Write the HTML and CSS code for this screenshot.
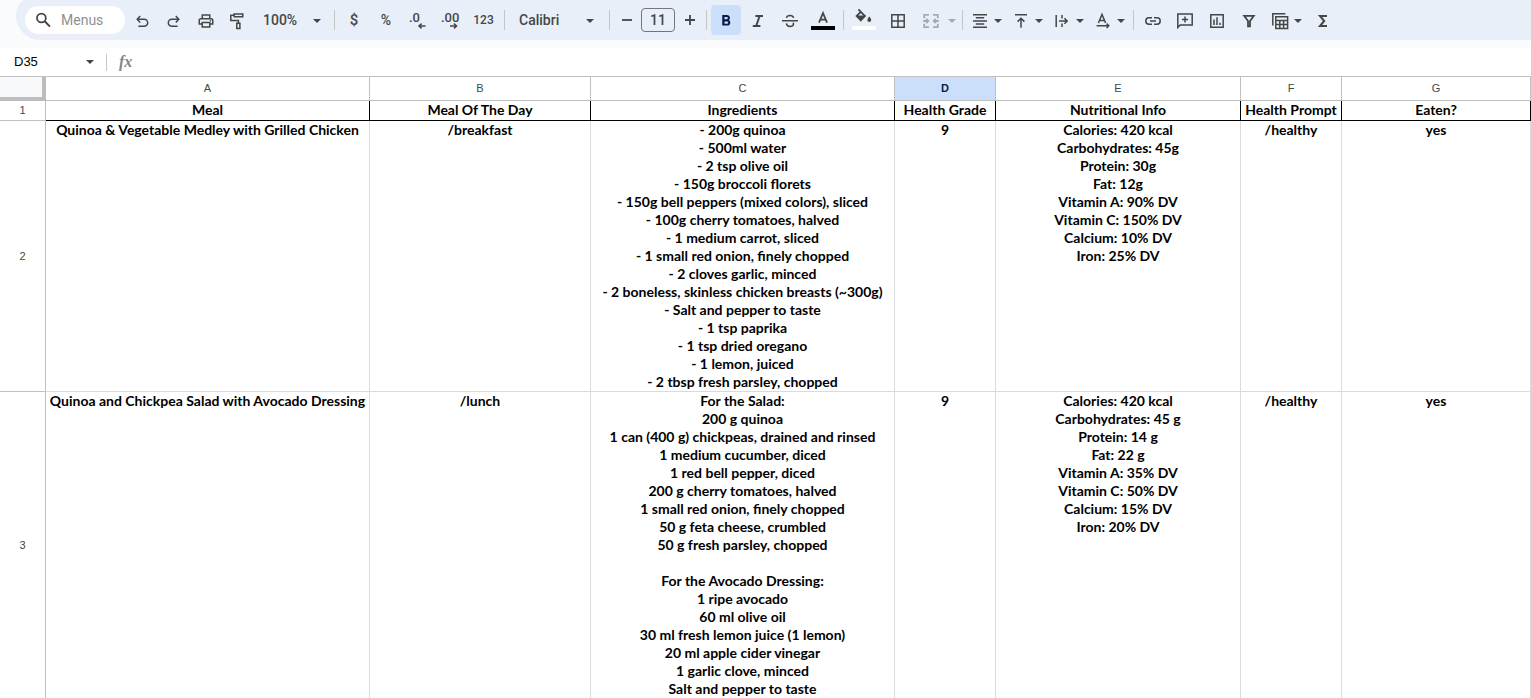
FILE: index.html
```html
<!DOCTYPE html>
<html lang="en">
<head>
<meta charset="utf-8">
<title>Meal plan</title>
<link rel="stylesheet" href="styles.css">
</head>
<body>
<header class="shell">
  <div class="toolbar" role="toolbar" aria-label="Formatting">
    <label class="search">
      <svg class="search-icon" viewBox="0 0 18 18" aria-hidden="true"><circle cx="6.4" cy="7" r="4.4" class="line bold"/><path d="M9.7 10.3 15 15.6" class="line heavy"/></svg>
      <input type="search" placeholder="Menus" aria-label="Menus">
    </label>
    <button class="tool" aria-label="Undo"><svg class="icon" viewBox="0 0 18 18"><path class="line" d="M7.2 4 4.2 7.2l3 3.2M4.5 7.2h6.7a3.4 3.4 0 0 1 0 7H5.4"/></svg></button>
    <button class="tool" aria-label="Redo"><svg class="icon" viewBox="0 0 18 18"><path class="line" d="M10.8 4l3 3.2-3 3.2M13.5 7.2H6.8a3.4 3.4 0 0 0 0 7h5.8"/></svg></button>
    <button class="tool" aria-label="Print"><svg class="icon" viewBox="0 0 24 24"><path d="M19 8h-1V3H6v5H5c-1.66 0-3 1.34-3 3v6h4v4h12v-4h4v-6c0-1.66-1.34-3-3-3zM8 5h8v3H8V5zm8 12v2H8v-4h8v4zm2-2v-2H6v2H4v-4c0-.55.45-1 1-1h14c.55 0 1 .45 1 1v4h-2z"/><circle cx="18" cy="11.5" r="1"/></svg></button>
    <button class="tool" aria-label="Paint format"><svg class="icon" viewBox="0 0 18 18"><path class="line" d="M5.2 1.9h8.6v2.9H5.2zM5 3.2H1.8v5.3h7.6v2.6M7.8 11.3h3.1v5.3H7.8z"/></svg></button>
    <div class="pick zoom"><select aria-label="Zoom"><option>100%</option></select><svg class="arrow" viewBox="0 0 8 4"><path d="M0 0h8L4 4z"/></svg></div>
    <span class="sep"></span>
    <button class="tool currency" aria-label="Format as currency">$</button>
    <button class="tool" aria-label="Format as percent">%</button>
    <button class="tool" aria-label="Decrease decimal places"><svg class="icon wide" viewBox="0 0 20 18"><text x="1" y="10">.0</text><path class="line" d="M17.5 14H11M13.6 11.6 11 14l2.6 2.4"/></svg></button>
    <button class="tool" aria-label="Increase decimal places"><svg class="icon wide" viewBox="0 0 20 18"><text x="1" y="10">.00</text><path class="line" d="M10 14h6.5M14 11.6l2.6 2.4-2.6 2.4"/></svg></button>
    <button class="tool number">123</button>
    <span class="sep"></span>
    <div class="pick font"><select aria-label="Font"><option>Calibri</option></select><svg class="arrow" viewBox="0 0 8 4"><path d="M0 0h8L4 4z"/></svg></div>
    <span class="sep"></span>
    <button class="tool step" aria-label="Decrease font size"><svg class="glyph" viewBox="0 0 18 18"><path class="line bold" d="M4 9h10"/></svg></button>
    <input class="size" type="text" value="11" aria-label="Font size">
    <button class="tool step" aria-label="Increase font size"><svg class="glyph" viewBox="0 0 18 18"><path class="line bold" d="M4 9h10M9 4v10"/></svg></button>
    <span class="sep"></span>
    <button class="tool on" aria-label="Bold" aria-pressed="true"><svg class="icon" viewBox="0 0 24 24"><path d="M15.6 10.8c.97-.67 1.65-1.77 1.65-2.8C17.25 5.7 15.5 4 13.25 4H7v14h7.04c2.1 0 3.71-1.7 3.71-3.8 0-1.5-.86-2.8-2.15-3.4zM10 6.5h3a1.5 1.5 0 0 1 0 3h-3zm3.5 9H10v-3h3.5a1.5 1.5 0 0 1 0 3z"/></svg></button>
    <button class="tool" aria-label="Italic"><svg class="icon" viewBox="0 0 18 18"><path class="line heavy" d="M6.4 4H14M3.8 14h7.6M10.6 4 7.2 14"/></svg></button>
    <button class="tool" aria-label="Strikethrough"><svg class="icon" viewBox="0 0 18 18"><path class="line" d="M1 8.7h16M12.6 5.9C12.2 4 11 3.4 9 3.4c-2 0-3.4.8-3.4 2.5M5.4 11.4c.2 2 1.6 3 3.6 3s3.5-.8 3.5-2.4c0-.6-.2-1-.5-1.4"/></svg></button>
    <button class="tool medium" aria-label="Text color"><svg class="swatch" viewBox="0 0 24 24"><path class="line bold" d="M8 12.6 12 3l4 9.6M9.2 9.7h5.6"/><path class="ink" d="M0 16h24v4H0z"/></svg></button>
    <span class="sep"></span>
    <button class="tool medium" aria-label="Fill color"><svg class="swatch" viewBox="0 0 24 24"><path class="line bold" d="M6.4 -.6 12.9 6 8.8 10.2 4.6 6 8.8 1.8"/><path d="M4 5.6h9.8L8.8 11.4zM17.3 6.6c1.3 1.7 1.9 2.4 1.9 3.4a1.9 1.9 0 0 1-3.8 0c0-1 .6-1.7 1.9-3.4z"/><path class="paper" d="M0 16h24v4H0z"/></svg></button>
    <button class="tool medium" aria-label="Borders"><svg class="icon" viewBox="0 0 18 18"><path class="line" d="M2.8 2.8h12.4v12.4H2.8zM9 2.8v12.4M2.8 9h12.4"/></svg></button>
    <button class="tool menu merge" disabled aria-label="Merge cells"><svg class="icon" viewBox="0 0 18 18"><path class="line bold" d="M7 2.8H2.2v3.4M7 15.2H2.2v-3.4M11 2.8h4.8v3.4M11 15.2h4.8v-3.4M1.2 9h5M4.2 6.8 6.4 9l-2.2 2.2M16.8 9h-5M13.8 6.8 11.6 9l2.2 2.2"/></svg><svg class="arrow" viewBox="0 0 8 4"><path d="M0 0h8L4 4z"/></svg></button>
    <span class="sep"></span>
    <button class="tool menu" aria-label="Horizontal align"><svg class="icon" viewBox="0 0 18 18"><path class="line" d="M2 2.7h14M4.8 5.8h8.4M2 9h14M4.8 12.1h8.4M2 15.2h14"/></svg><svg class="arrow" viewBox="0 0 8 4"><path d="M0 0h8L4 4z"/></svg></button>
    <button class="tool menu" aria-label="Vertical align"><svg class="icon" viewBox="0 0 18 18"><path class="line" d="M3 2.8h12M9 15.8V6.6M5.6 9.6 9 6.2l3.4 3.4"/></svg><svg class="arrow" viewBox="0 0 8 4"><path d="M0 0h8L4 4z"/></svg></button>
    <button class="tool menu" aria-label="Text wrapping"><svg class="icon" viewBox="0 0 18 18"><path class="line" d="M3.2 3v12M9 3v3.4M9 11.6V15M6 9h7.6M11.4 6.2 14.2 9l-2.8 2.8"/></svg><svg class="arrow" viewBox="0 0 8 4"><path d="M0 0h8L4 4z"/></svg></button>
    <button class="tool menu" aria-label="Text rotation"><svg class="icon" viewBox="0 0 18 18"><path class="line" d="M4.4 11 8 2.4l3.6 8.6M5.6 8.4h4.8M2.6 13.8h12M12.6 11.6l2.2 2.2-2.2 2.2"/></svg><svg class="arrow" viewBox="0 0 8 4"><path d="M0 0h8L4 4z"/></svg></button>
    <span class="sep"></span>
    <button class="tool" aria-label="Insert link"><svg class="icon" viewBox="0 0 18 18"><path class="line" d="M8 5.8H5a3.2 3.2 0 0 0 0 6.4h3M10 5.8h3a3.2 3.2 0 0 1 0 6.4h-3M6 9h6"/></svg></button>
    <button class="tool" aria-label="Insert comment"><svg class="icon" viewBox="0 0 18 18"><path class="line" d="M1.8 15.4V2h14.4v11H4.2zM9 4.4v6.2M5.9 7.5h6.2"/></svg></button>
    <button class="tool" aria-label="Insert chart"><svg class="icon" viewBox="0 0 18 18"><path class="line" d="M2.8 2.8h12.4v12.4H2.8zM6 7.4V13M9 5.2V13M12 10.8V13"/></svg></button>
    <button class="tool" aria-label="Create a filter"><svg class="icon" viewBox="0 0 18 18"><path class="line bold" d="M4.2 3.8h9.6L10 9v5.4H8V9z"/></svg></button>
    <button class="tool menu views" aria-label="Table views"><svg class="icon" viewBox="0 0 18 18"><path class="line" d="M1.8 13.5V1.8h12.6M4.8 4.8h11.8v11.6H4.8zM4.8 8.6h11.8M4.8 12.4h11.8M8.8 8.6v7.8M12.6 8.6v7.8"/></svg><svg class="arrow" viewBox="0 0 8 4"><path d="M0 0h8L4 4z"/></svg></button>
    <button class="tool" aria-label="Functions"><svg class="icon" viewBox="0 0 18 18"><path class="line heavy" d="M13 4H6l4.2 5L6 14h7"/></svg></button>
  </div>
</header>

<div class="formula-bar">
  <div class="name-box"><input type="text" value="D35" aria-label="Name box"><svg class="arrow" viewBox="0 0 8 4"><path d="M0 0h8L4 4z"/></svg></div>
  <label class="fx" for="formula">fx</label>
  <input class="formula" id="formula" type="text">
</div>

<table class="grid">
  <colgroup><col class="c-num"><col class="c-a"><col class="c-b"><col class="c-c"><col class="c-d"><col class="c-e"><col class="c-f"><col class="c-g"></colgroup>
  <thead>
    <tr><th class="corner"></th><th>A</th><th>B</th><th>C</th><th class="active">D</th><th>E</th><th>F</th><th>G</th></tr>
  </thead>
  <tbody>
    <tr class="titles"><th>1</th><td>Meal</td><td>Meal Of The Day</td><td>Ingredients</td><td>Health Grade</td><td>Nutritional Info</td><td>Health Prompt</td><td>Eaten?</td></tr>
    <tr><th>2</th><td>Quinoa &amp; Vegetable Medley with Grilled Chicken</td><td>/breakfast</td>
      <td>- 200g quinoa<br>- 500ml water<br>- 2 tsp olive oil<br>- 150g broccoli florets<br>- 150g bell peppers (mixed colors), sliced<br>- 100g cherry tomatoes, halved<br>- 1 medium carrot, sliced<br>- 1 small red onion, finely chopped<br>- 2 cloves garlic, minced<br>- 2 boneless, skinless chicken breasts (~300g)<br>- Salt and pepper to taste<br>- 1 tsp paprika<br>- 1 tsp dried oregano<br>- 1 lemon, juiced<br>- 2 tbsp fresh parsley, chopped</td>
      <td>9</td>
      <td>Calories: 420 kcal<br>Carbohydrates: 45g<br>Protein: 30g<br>Fat: 12g<br>Vitamin A: 90% DV<br>Vitamin C: 150% DV<br>Calcium: 10% DV<br>Iron: 25% DV</td>
      <td>/healthy</td><td>yes</td></tr>
    <tr><th>3</th><td>Quinoa and Chickpea Salad with Avocado Dressing</td><td>/lunch</td>
      <td>For the Salad:<br>200 g quinoa<br>1 can (400 g) chickpeas, drained and rinsed<br>1 medium cucumber, diced<br>1 red bell pepper, diced<br>200 g cherry tomatoes, halved<br>1 small red onion, finely chopped<br>50 g feta cheese, crumbled<br>50 g fresh parsley, chopped<br><br>For the Avocado Dressing:<br>1 ripe avocado<br>60 ml olive oil<br>30 ml fresh lemon juice (1 lemon)<br>20 ml apple cider vinegar<br>1 garlic clove, minced<br>Salt and pepper to taste</td>
      <td>9</td>
      <td>Calories: 420 kcal<br>Carbohydrates: 45 g<br>Protein: 14 g<br>Fat: 22 g<br>Vitamin A: 35% DV<br>Vitamin C: 50% DV<br>Calcium: 15% DV<br>Iron: 20% DV</td>
      <td>/healthy</td><td>yes</td></tr>
  </tbody>
</table>
</body>
</html>
```

FILE: styles.css
```css
* { box-sizing: border-box; }

body {
  margin: 0;
  overflow: hidden;
  background: #fff;
  color: #000;
  font-family: Roboto, "Liberation Sans", sans-serif;
}

button, input, select {
  font: inherit;
  color: inherit;
  border: 0;
  margin: 0;
  padding: 0;
  background: none;
  outline: none;
}

.shell {
  height: 48px;
  padding-left: 16px;
  background: #f9fbfd;
}

.toolbar {
  display: flex;
  align-items: center;
  gap: 2px;
  height: 40px;
  padding-left: 9px;
  border-radius: 10px 0 0 24px / 16px 0 0 24px;
  background: #e9eff9;
  color: #444746;
  font-size: 14px;
  font-weight: 500;
}

.search {
  display: flex;
  align-items: center;
  flex: none;
  gap: 8px;
  width: 100px;
  height: 28px;
  padding-left: 10px;
  border-radius: 14px;
  background: #fff;
}
.search-icon { width: 18px; height: 18px; flex: none; }
.search input { width: 60px; font-weight: 400; }
.search input::placeholder { color: #8e918f; opacity: 1; }

.tool {
  display: flex;
  align-items: center;
  justify-content: center;
  flex: none;
  width: 30px;
  height: 30px;
  border-radius: 4px;
}
.tool.on { background: #cbdffa; color: #041e49; }
.tool.medium { width: 32px; }
.tool.step { width: 25px; }
.tool.number { width: 33px; font-size: 12px; }
.tool.currency { font-size: 15px; }
.tool.menu { width: 39px; gap: 5px; }
.tool.merge { width: 42px; gap: 8px; justify-content: flex-start; padding-left: 6px; opacity: .4; }
.tool.views { width: 40px; }

svg { fill: currentColor; overflow: visible; }
.line { fill: none; stroke: currentColor; stroke-width: 1.5; }
.bold { stroke-width: 1.8; }
.heavy { stroke-width: 2; }
.icon { width: 18px; height: 18px; flex: none; margin-top: 2px; }
.icon.wide { width: 20px; }
.icon text { font-size: 13px; }
.glyph { width: 18px; height: 18px; }
.swatch { width: 24px; height: 24px; flex: none; margin-top: 4px; }
.ink { fill: #000; }
.paper { fill: #fff; }
.arrow { width: 8px; height: 4px; flex: none; margin-top: 2px; }

.sep {
  flex: none;
  width: 1px;
  height: 20px;
  margin: 0 2px;
  background: #c4c7c5;
}

.pick { display: flex; align-items: center; flex: none; height: 30px; }
.pick select { appearance: none; flex: 1; min-width: 0; }
.pick.zoom { width: 75px; padding: 0 9px 0 8px; }
.pick.font { width: 96px; padding: 0 11px 0 10px; }

.size {
  flex: none;
  width: 34px;
  height: 24px;
  border: 1px solid #747775;
  border-radius: 4px;
  text-align: center;
}

.formula-bar { display: flex; align-items: center; height: 28px; }
.name-box {
  display: flex;
  align-items: center;
  width: 107px;
  height: 17px;
  padding: 0 12px 0 14px;
  border-right: 1px solid #c7c7c7;
  color: #444746;
}
.name-box input { flex: 1; min-width: 0; padding-bottom: 2px; color: #000; font: 13px "Liberation Sans", sans-serif; }
.name-box .arrow { margin-top: 0; }
.fx {
  padding: 0 12px;
  color: #80868b;
  font: italic 700 16px "Liberation Serif", serif;
}
.formula { flex: 1; font-size: 13px; }

.grid {
  width: 100%;
  table-layout: fixed;
  border-collapse: separate;
  border-spacing: 0;
  border-top: 1px solid #c0c0c0;
}
.c-num { width: 46px; }
.c-a { width: 324px; }
.c-b { width: 221px; }
.c-c { width: 304px; }
.c-d { width: 101px; }
.c-e { width: 245px; }
.c-f { width: 101px; }
.c-g { width: 189px; }

.grid th {
  padding: 0 0 1px;
  border-right: 1px solid #c0c0c0;
  border-bottom: 1px solid #c0c0c0;
  color: #444746;
  font: 11px "Liberation Sans", sans-serif;
}
.grid thead th { height: 24px; }
.grid .active { background: #cbdffa; color: #041e49; font-weight: 700; }
.grid .corner {
  border-right: 4px solid #bdbdbd;
  border-bottom: 4px solid #bdbdbd;
  background: #f8f9fa;
}

.grid td {
  padding: 0;
  border-right: 1px solid #dadada;
  border-bottom: 1px solid #dadada;
  font: 700 14px/18px Lato, sans-serif;
  text-align: center;
  vertical-align: top;
  white-space: nowrap;
}
.grid .titles td {
  height: 20px;
  border-color: #000;
}
```
